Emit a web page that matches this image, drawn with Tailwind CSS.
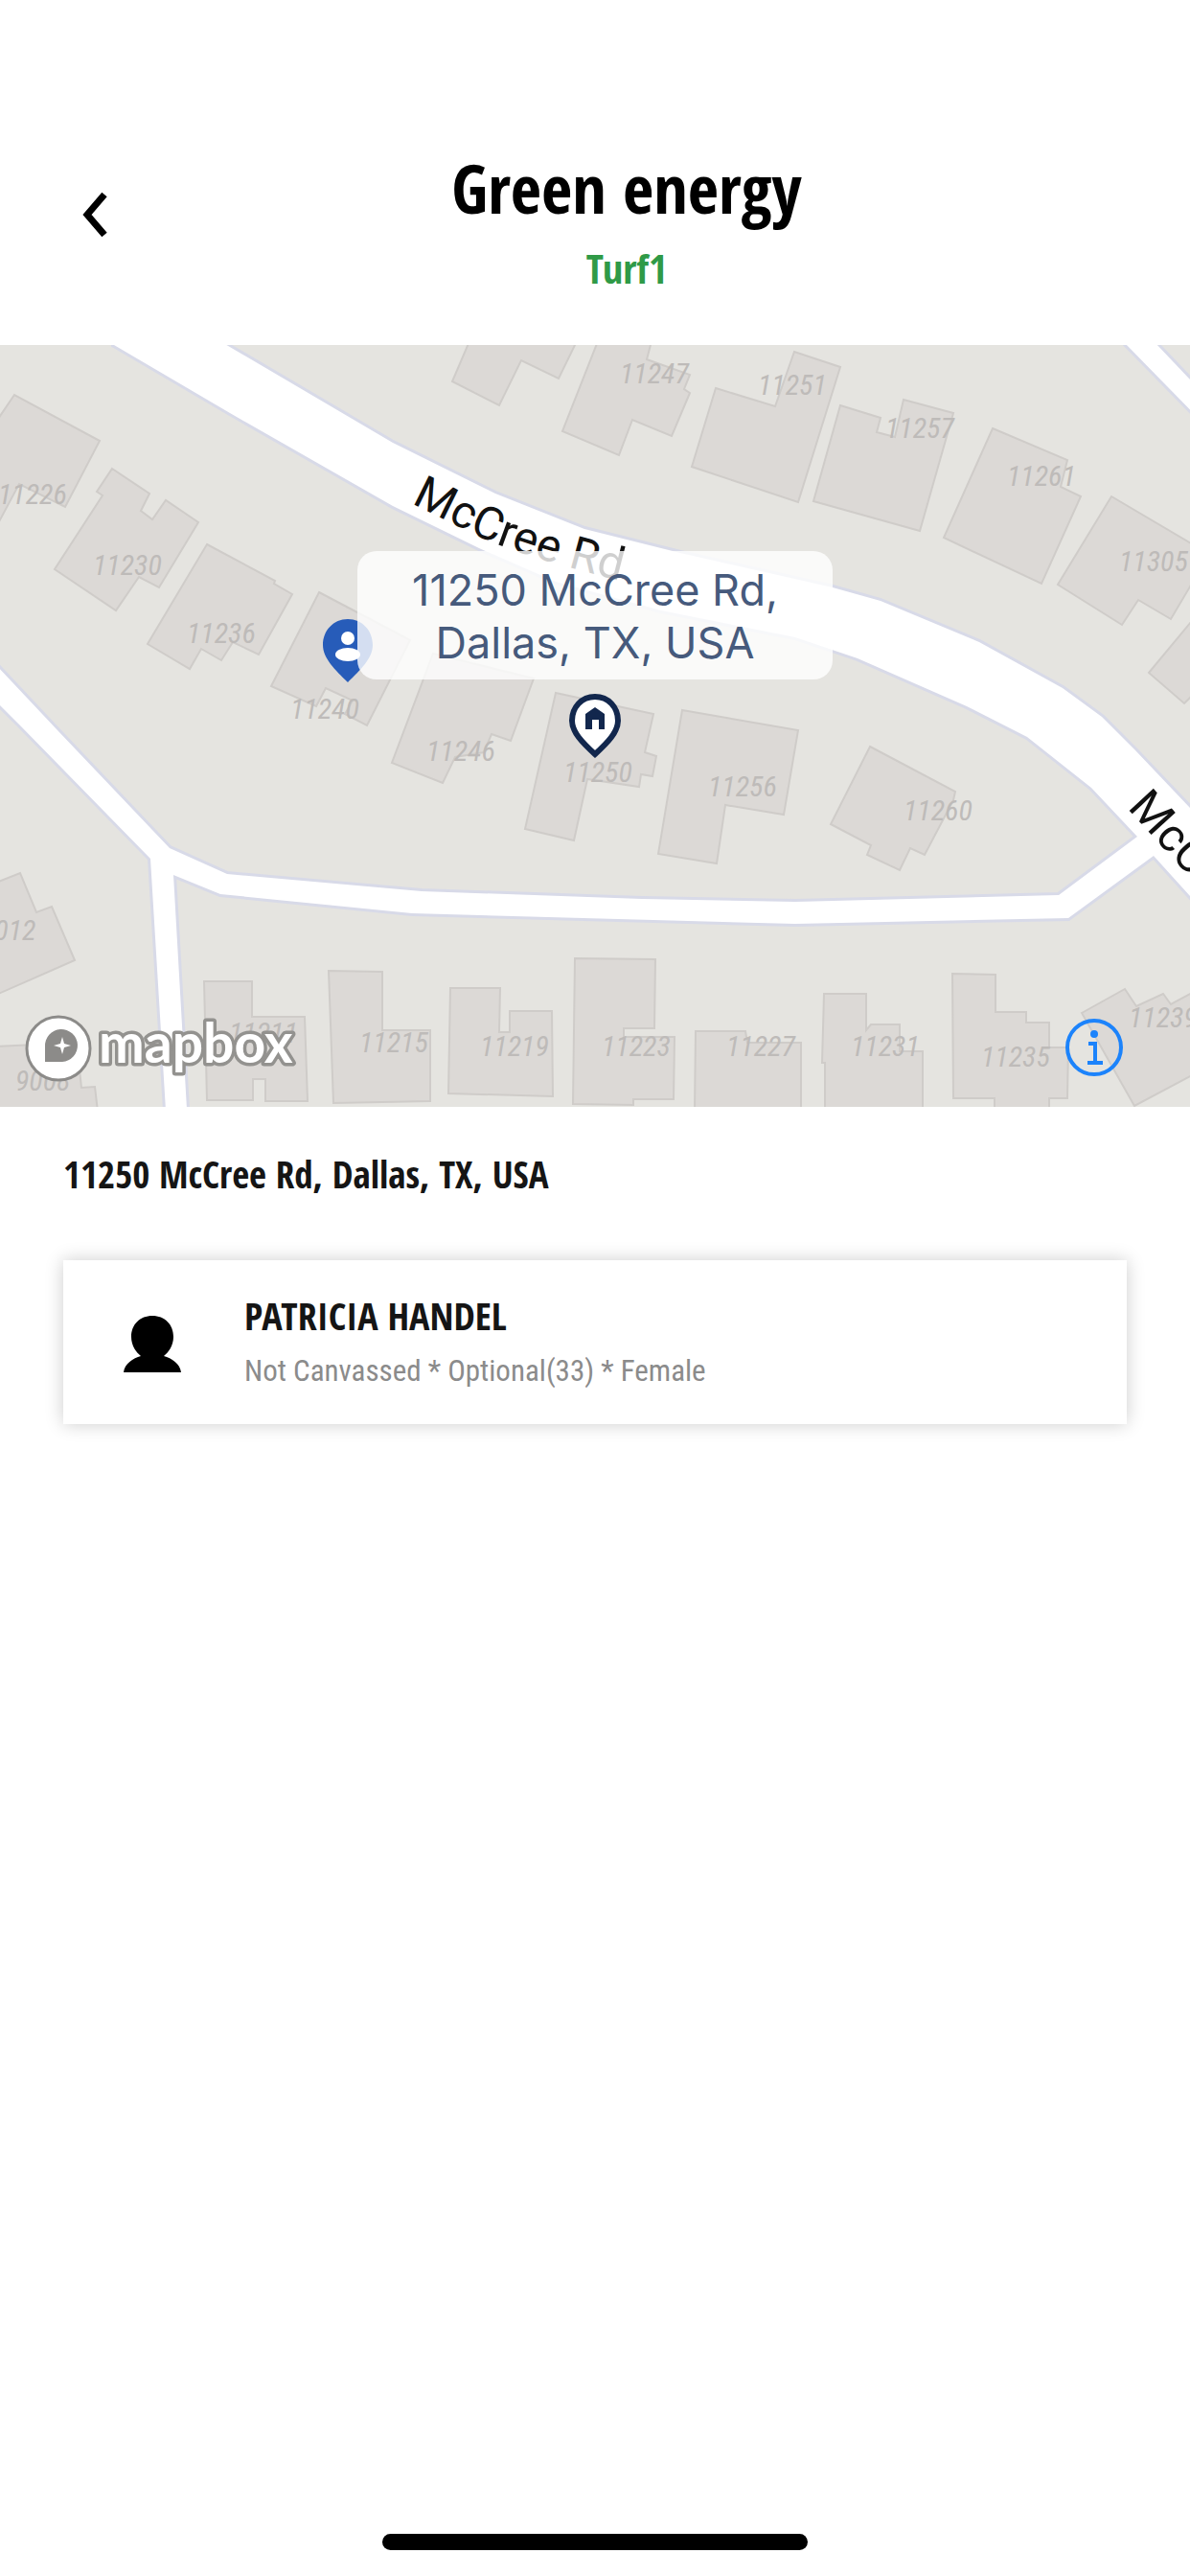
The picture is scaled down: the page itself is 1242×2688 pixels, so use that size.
<!DOCTYPE html>
<html lang="en">
<head>
<meta charset="utf-8">
<meta name="viewport" content="width=device-width, initial-scale=1">
<title>Green energy</title>
<script src="https://cdn.jsdelivr.net/npm/@tailwindcss/browser@4"></script>
</head>
<body class="flex min-h-screen flex-col bg-white font-['Open_Sans_Condensed','Roboto_Condensed','Open_Sans',sans-serif] text-black">
  <header class="flex h-[360px] items-start px-[67px] pt-[152px]">
    <button type="button" aria-label="Back" class="flex h-36 w-[66px] items-center pl-4">
      <svg class="h-[52px] w-8" viewBox="0 0 32 52" fill="none" stroke="#000" stroke-width="7"><path d="M26 5 8 26l18 21"/></svg>
    </button>
    <div class="flex-1 text-center font-bold">
      <h1 class="text-[70px] leading-[88px]">Green energy</h1>
      <p class="mt-3 text-[42px] leading-[56px] text-[#2f9a47]">Turf1</p>
    </div>
  </header>

  <main>
    <section aria-label="Map" class="relative h-[795px] overflow-hidden bg-[#e5e4e0]">
      <svg class="h-full w-full" viewBox="0 360 1242 795" preserveAspectRatio="xMidYMid slice">
        <defs>
          <g id="roads">
            <path d="M119 360 240 431 410 528 500 572 580 607 690 637 830 665 895 687 1009 737 1072 769 1139 822 1187 873 1204 893 1262 957V864L1185 783 1150 748 1109 718 1022 670 919 627 869 613 710 577 610 552 517 515 410 462 233 358V340H119Z"/>
            <path d="M-20 677 60 762 177 885 237 912 440 930 670 938 830 941 1105 934 1187 873 1210 860 1230 880 1204 893 1115 958 830 964 430 953 230 933 181 913 196 1175H174L157 896 22 758-20 716Z"/>
            <path d="M1172 356 1262 448V417L1204 356Z"/>
          </g>
          <path id="road-name-west" d="M429 525 500 560Q550 583 680 614"/>
          <path id="road-name-east" d="M1176 843 1320 1000"/>
        </defs>

        <!-- buildings -->
        <g fill="#dcd9d6" stroke="#cfccc9" stroke-width="2">
          <path d="M-4 440 15 412 104 460 68 529 20 505-4 550Z"/>
          <path d="M117 489 156 515 147 533 159 542 173 522 207 545 166 613 145 602 121 637 57 594 107 517 101 513Z"/>
          <path d="M216 568 287 606 286 609 305 620 270 683 243 670 231 689 210 677 198 698 154 672Z"/>
          <path d="M333 618 428 668 383 757 360 745 368 731 340 718 330 737 283 716Z"/>
          <path d="M452 682 557 708 533 773 513 766 505 785 475 790 462 817 409 796Z"/>
          <path d="M580 723 682 745 673 785 685 789 681 810 669 808 667 821 613 813 599 877 548 865Z"/>
          <path d="M712 741 833 762 818 850 757 840 748 901 687 891Z"/>
          <path d="M908 779 997 826 995 835 965 892 950 885 939 908 905 892 909 882 867 860Z"/>
          <path d="M490 356 472 398 521 423 544 376 583 395 602 356Z"/>
          <path d="M624 356 587 450 646 475 660 438 701 455 720 410 714 406 720 391 675 375 680 356Z"/>
          <path d="M747 405 809 424 829 367 877 383 833 524 722 487Z"/>
          <path d="M877 423 919 436 915 451 934 456 943 417 995 431 960 554 849 523Z"/>
          <path d="M1036 447 1114 480 1107 508 1128 518 1087 609 985 561Z"/>
          <path d="M1160 518 1248 570V602L1222 646 1188 626 1171 652 1104 610Z"/>
          <path d="M1248 643 1199 702 1236 734 1248 722Z"/>
          <path d="M-4 921 21 911 38 952 54 946 78 1002-4 1038Z"/>
          <path d="M-4 1092 80 1088 85 1135 99 1134 102 1160H-4Z"/>
          <path d="M213 1024H263V1061H318L321 1149H277V1126H264V1148H216Z"/>
          <path d="M343 1013 399 1014V1075H449V1149L348 1151Z"/>
          <path d="M470 1031H522L521 1077H532V1055H576L577 1144 468 1141Z"/>
          <path d="M600 1000 684 1001 683 1073H651V1082H704L703 1147H661V1153L598 1152Z"/>
          <path d="M726 1076H778L780 1088H836V1160H725Z"/>
          <path d="M860 1037H904V1075L909 1069H939V1097H963V1160H861V1109H858Z"/>
          <path d="M994 1016 1039 1017V1056H1071V1067H1095V1093H1115L1114 1146H1095V1160H1038V1146H995Z"/>
          <path d="M1129 1057 1174 1032 1186 1050 1214 1037 1222 1048 1248 1034V1120L1184 1154Z"/>
        </g>

        <use href="#roads" fill="none" stroke="#d8dae8" stroke-width="6"/>
        <use href="#roads" fill="#fff"/>

        <!-- house numbers -->
        <g class="font-['Roboto_Condensed',sans-serif] text-[30px] italic" fill="#bebbb9">
          <text x="-2" y="526">11226</text>
          <text x="97" y="600">11230</text>
          <text x="195" y="671">11236</text>
          <text x="303" y="750">11240</text>
          <text x="445" y="794">11246</text>
          <text x="588" y="816">11250</text>
          <text x="739" y="831">11256</text>
          <text x="943" y="856">11260</text>
          <text x="647" y="400">11247</text>
          <text x="791" y="412">11251</text>
          <text x="924" y="457">11257</text>
          <text x="1051" y="507">11261</text>
          <text x="1168" y="596">11305</text>
          <text x="-20" y="981">9012</text>
          <text x="16" y="1138">9008</text>
          <text x="239" y="1088">11211</text>
          <text x="375" y="1098">11215</text>
          <text x="501" y="1102">11219</text>
          <text x="628" y="1102">11223</text>
          <text x="758" y="1102">11227</text>
          <text x="888" y="1102">11231</text>
          <text x="1024" y="1113">11235</text>
          <text x="1178" y="1072">11239</text>
        </g>

        <!-- street names -->
        <g class="font-[Roboto,sans-serif] text-[48px]" fill="#111">
          <text><textPath href="#road-name-west">McCree Rd</textPath></text>
          <text><textPath href="#road-name-east">McCree Rd</textPath></text>
        </g>

        <!-- voter pin -->
        <path d="M363 646c-15 0-26 12-26 27 0 14 13 26 26 39 13-13 26-25 26-39 0-15-11-27-26-27Z" fill="#275cb9"/>
        <circle cx="363" cy="666" r="7" fill="#fff"/>
        <ellipse cx="363" cy="683" rx="13" ry="7" fill="#fff"/>

        <!-- household pin -->
        <path d="M621 727c-14 0-24 11-24 25 0 12 11 23 24 35 13-12 24-23 24-35 0-14-10-25-24-25Z" fill="#fff" stroke="#12274d" stroke-width="6"/>
        <path d="M611 761V745l10-7 10 7v16h-6v-10h-7v10Z" fill="#12274d"/>

        <!-- map provider logo -->
        <circle cx="61" cy="1094" r="33" fill="#fff" stroke="#8c8b89" stroke-width="3"/>
        <path d="M47 1108V1092A17 17 0 1 1 65 1108Z" fill="#8c8b89"/>
        <path d="M65 1082 67 1089 74 1091 67 1093 65 1100 63 1093 56 1091 63 1089Z" fill="#fff"/>
        <text x="103" y="1109" class="font-[Lato,sans-serif] text-[57px] font-bold" fill="#fff" stroke="#93928f" stroke-width="7" stroke-linejoin="round" paint-order="stroke">mapbox</text>
      </svg>

      <p class="absolute top-[215px] left-1/2 w-[496px] -translate-x-1/2 rounded-[20px] bg-white/80 pt-[13px] pb-[11px] text-center font-[Inter,sans-serif] text-[45px] leading-[55px] text-[#465a7c]">11250 McCree Rd,<br>Dallas, TX, USA</p>

      <button type="button" aria-label="Map information" class="absolute right-[70px] bottom-[32px]">
        <svg class="size-[60px]" viewBox="0 0 60 60" fill="none" stroke="#1c83fb"><circle cx="30" cy="30" r="28" stroke-width="4"/><circle cx="30" cy="16" r="4" fill="#1c83fb" stroke="none"/><path d="M24 26h7v20M23 46h16" stroke-width="4"/></svg>
      </button>
    </section>

    <section class="px-[66px] pt-[42px]">
      <h2 class="text-[39px] leading-[56px] font-bold text-[#151515]">11250 McCree Rd, Dallas, TX, USA</h2>
      <a href="#" class="mt-[62px] flex h-[171px] items-center bg-white pt-1 shadow-[0_0_18px_rgba(0,0,0,0.2)]">
        <span class="flex w-[189px] pl-[63px]">
          <svg class="size-[60px]" viewBox="0 0 60 60"><path d="M30 0c13 0 22 9 22 22 0 9-5 16-10 20 8 2 17 8 18 17H0c1-9 10-15 18-17C13 38 8 31 8 22 8 9 17 0 30 0Z"/></svg>
        </span>
        <span class="flex flex-col">
          <span class="text-[40px] leading-[56px] font-bold text-[#151515]">PATRICIA HANDEL</span>
          <span class="font-['Roboto_Condensed',sans-serif] text-[31px] leading-[60px] text-[#8b8b8b]">Not Canvassed * Optional(33) * Female</span>
        </span>
      </a>
    </section>
  </main>

  <div class="mt-auto flex justify-center pb-[27px]"><div class="h-[17px] w-[444px] rounded-full bg-black"></div></div>
</body>
</html>
